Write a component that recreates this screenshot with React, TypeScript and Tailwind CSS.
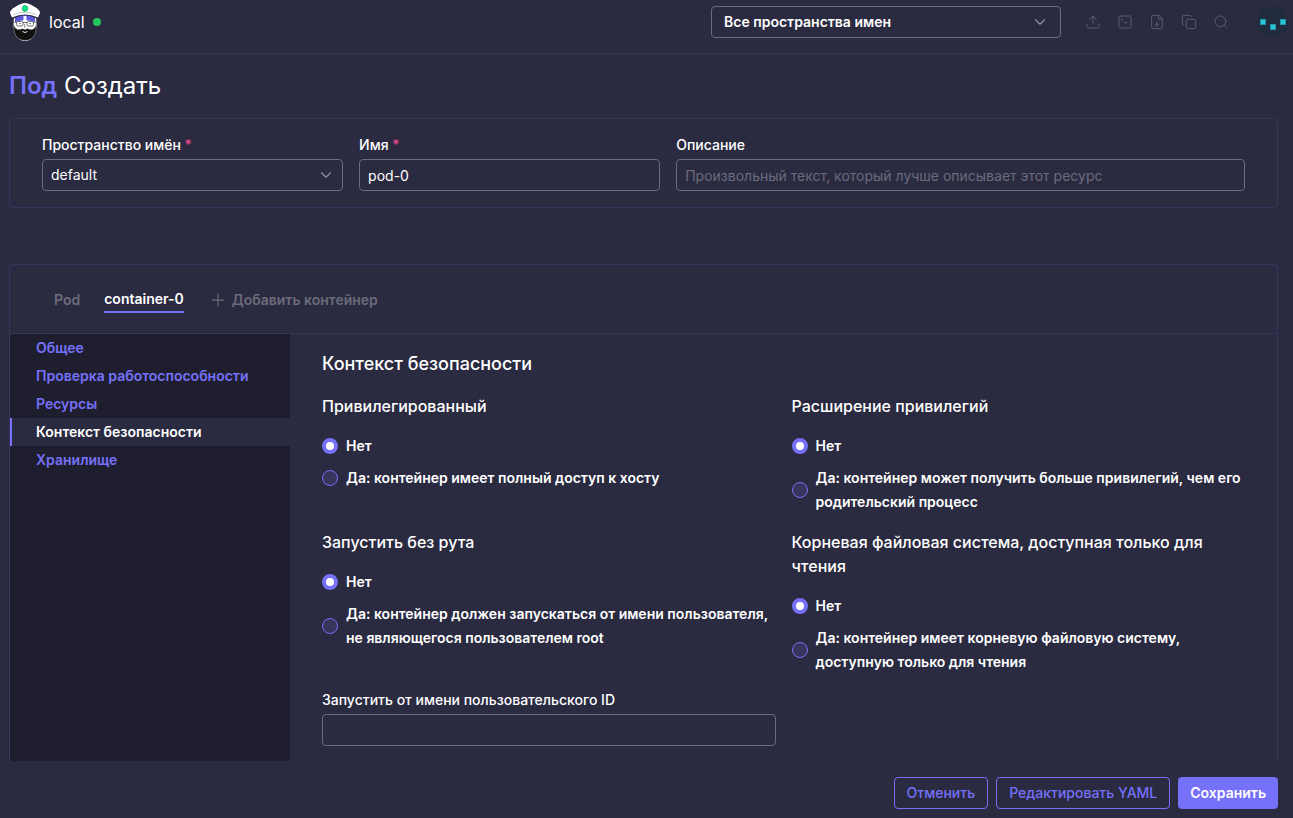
import type { ReactNode } from "react";
import clsx from "clsx";
import {
  ChevronDown,
  Copy,
  FileDown,
  Plus,
  Search,
  SquareTerminal,
  Upload,
} from "lucide-react";

const Logo = () => (
  <svg className="w-8 h-10" viewBox="0 0 32 40" aria-hidden="true">
    <path d="M5 16C4 23 5 30 7 34Q11 39 16 39Q21 39 25 34C27 30 28 23 27 16Z" fill="#fff" />
    <path
      d="M5 23Q4.500 30 6.500 33.500Q10 38.500 16 38.500Q22 38.500 25.500 33.500Q27.500 30 27 23Q25.500 28 21.500 27.500Q18.500 26 16 27.500Q13.500 26 10.500 27.500Q6.500 28 5 23Z"
      fill="#111"
      stroke="#bbb"
      strokeWidth="0.4"
    />
    <path d="M6 16Q16 10.500 26 16L26 20Q16 16.500 6 20Z" fill="#5d5ae0" />
    <path d="M14.500 14h3v5h-3z" fill="#fff" />
    <path
      d="M3 15.500L1 11Q1 7.500 7 4.500Q12 1 16 1Q20 1 25 4.500Q31 7.500 31 11L29 15.500Q16 9.500 3 15.500Z"
      fill="#fff"
    />
    <path d="M4.500 12.500Q16 8 27.500 12.500" fill="none" stroke="#888" strokeWidth="0.5" />
    <ellipse cx="16" cy="6.500" rx="2.800" ry="3" fill="#00e68a" stroke="#147a48" strokeWidth="0.5" />
    <g fill="#fff" stroke="#333" strokeWidth="0.7">
      <rect x="7.500" y="19.500" width="6.500" height="4.500" rx="1.500" />
      <rect x="18" y="19.500" width="6.500" height="4.500" rx="1.500" />
      <path d="M14 20.500h4M7.500 20.500L5 20M24.500 20.500L27 20" fill="none" />
      <path d="M15.500 22v3h1.500" fill="none" strokeWidth="0.5" />
    </g>
    <path d="M10 21.500h2M20 21.500h2" stroke="#333" strokeWidth="0.6" />
    <path d="M13.500 29.500Q16 31.500 18.500 29.500" fill="none" stroke="#fff" strokeWidth="0.9" />
  </svg>
);

const Avatar = () => (
  <svg className="w-8 h-8" viewBox="0 0 32 32" aria-hidden="true">
    <circle cx="16" cy="16" r="16" fill="#222b3e" />
    <g fill="#26c6da" stroke="#2491a5">
      <rect x="3.500" y="13.500" width="5" height="5" />
      <rect x="13.500" y="18.500" width="5" height="5" />
      <rect x="23.500" y="13.500" width="5" height="5" />
    </g>
  </svg>
);

const actions = [
  { label: "Импортировать YAML", icon: Upload },
  { label: "Терминал", icon: SquareTerminal },
  { label: "Скачать KubeConfig", icon: FileDown },
  { label: "Копировать KubeConfig", icon: Copy },
  { label: "Поиск ресурсов", icon: Search },
];

const Header = () => {
  return (
    <header className="shrink-0 border-b border-[#37355b] pb-[9px]">
      <div className="flex h-11 items-center pl-[9px] pr-1">
        <Logo />
        <span className="ml-2 text-base">local</span>
        <span className="ml-2 size-2 rounded-full bg-[#22c55e]" />
        <div className="relative ml-auto w-[350px]">
          <select
            aria-label="Пространства имен"
            className="h-8 w-full appearance-none rounded border border-[#6c6b7b] bg-transparent px-3 text-sm font-semibold"
          >
            <option>Все пространства имен</option>
          </select>
          <ChevronDown
            className="pointer-events-none absolute right-3 top-[7px] size-[18px] text-[#9291a0]"
            strokeWidth={1.5}
          />
        </div>
        <div className="ml-4 flex">
          {actions.map(({ label, icon: Icon }) => (
            <button
              key={label}
              aria-label={label}
              className="flex size-8 items-center justify-center text-[#5c5a6e]"
            >
              <Icon size={16} strokeWidth={1.5} />
            </button>
          ))}
        </div>
        <button aria-label="Профиль" className="ml-5">
          <Avatar />
        </button>
      </div>
    </header>
  );
};

const Field = ({
  id,
  label,
  required,
  children,
}: {
  id: string;
  label: string;
  required?: boolean;
  children: ReactNode;
}) => (
  <div className="flex flex-col gap-1">
    <label htmlFor={id} className="text-sm font-medium">
      {label}
      {required && <span className="text-[#e5488c]"> *</span>}
    </label>
    {children}
  </div>
);

const inputClass =
  "h-8 w-full rounded border border-[#6c6b7b] bg-transparent px-2 text-sm placeholder:text-[#6c6b7b] outline-none";

const MetadataForm = () => (
  <div className="grid shrink-0 grid-cols-[9fr_9fr_17fr] gap-4 rounded border border-[#37355b] px-8 py-4">
    <Field id="namespace" label="Пространство имён" required>
      <div className="relative">
        <select id="namespace" className={clsx(inputClass, "appearance-none")}>
          <option>default</option>
        </select>
        <ChevronDown
          className="pointer-events-none absolute right-2 top-[7px] size-[18px] text-[#9291a0]"
          strokeWidth={1.5}
        />
      </div>
    </Field>
    <Field id="name" label="Имя" required>
      <input id="name" className={inputClass} defaultValue="pod-0" />
    </Field>
    <Field id="description" label="Описание">
      <input
        id="description"
        className={inputClass}
        placeholder="Произвольный текст, который лучше описывает этот ресурс"
      />
    </Field>
  </div>
);

const sections = [
  "Общее",
  "Проверка работоспособности",
  "Ресурсы",
  "Контекст безопасности",
  "Хранилище",
];

const Sidebar = () => (
  <nav className="w-[280px] shrink-0 bg-[#1f1e2f] text-sm font-semibold">
    {sections.map((name) => (
      <a
        key={name}
        href="#"
        className={clsx(
          "block border-l-2 pl-6 leading-7",
          name === "Контекст безопасности"
            ? "border-[#7571f9] bg-[#2a2a40] text-white"
            : "border-transparent text-[#7571f9]"
        )}
      >
        {name}
      </a>
    ))}
  </nav>
);

const RadioGroup = ({
  name,
  title,
  yes,
}: {
  name: string;
  title: string;
  yes: string;
}) => (
  <fieldset>
    <legend className="mb-4 text-base font-medium">{title}</legend>
    <div className="flex flex-col gap-2">
      {["Нет", yes].map((text, i) => (
        <label key={text} className="flex items-center gap-2 text-sm font-semibold leading-6">
          <input
            type="radio"
            name={name}
            defaultChecked={i === 0}
            className="size-4 shrink-0 appearance-none rounded-full border border-[#7571f9] bg-[#37355b] checked:border-4 checked:bg-white"
          />
          {text}
        </label>
      ))}
    </div>
  </fieldset>
);

const SecurityContext = () => (
  <section className="flex-1 px-8 py-4">
    <h2 className="mb-4 text-lg font-medium leading-7">Контекст безопасности</h2>
    <div className="grid grid-cols-2 gap-4">
      <RadioGroup
        name="privileged"
        title="Привилегированный"
        yes="Да: контейнер имеет полный доступ к хосту"
      />
      <RadioGroup
        name="escalation"
        title="Расширение привилегий"
        yes="Да: контейнер может получить больше привилегий, чем его родительский процесс"
      />
      <RadioGroup
        name="non-root"
        title="Запустить без рута"
        yes="Да: контейнер должен запускаться от имени пользователя, не являющегося пользователем root"
      />
      <RadioGroup
        name="read-only"
        title="Корневая файловая система, доступная только для чтения"
        yes="Да: контейнер имеет корневую файловую систему, доступную только для чтения"
      />
      <Field id="user-id" label="Запустить от имени пользовательского ID">
        <input id="user-id" className={inputClass} />
      </Field>
    </div>
  </section>
);

const Tabs = () => (
  <div className="flex h-[69px] shrink-0 items-center border-b border-[#37355b] px-11 pt-0.5 text-sm font-semibold text-[#6c6b7b]">
    <button>Pod</button>
    <button className="ml-6 border-b-2 border-[#7571f9] py-0.5 text-white">container-0</button>
    <button className="ml-6 flex items-center gap-1">
      <Plus size={20} strokeWidth={1.5} />
      Добавить контейнер
    </button>
  </div>
);

const Footer = () => (
  <footer className="flex shrink-0 justify-end gap-2 pb-[9px] pl-[9px] pr-[15px] pt-4 text-sm font-medium">
    <button className="h-8 rounded border border-[#7571f9] px-3 text-[#7571f9]">Отменить</button>
    <button className="h-8 rounded border border-[#7571f9] px-3 text-[#7571f9]">
      Редактировать YAML
    </button>
    <button className="h-8 rounded bg-[#7571f9] px-3 font-semibold text-white">Сохранить</button>
  </footer>
);

const App = () => {
  return (
    <div className="flex h-screen flex-col bg-[#2a2a40] font-['Inter',sans-serif] text-white">
      <Header />
      <main className="flex min-h-0 flex-1 flex-col overflow-hidden pl-[9px] pr-[15px]">
        <h1 className="my-4 text-2xl leading-8">
          <span className="font-semibold text-[#7571f9]">Под</span> Создать
        </h1>
        <MetadataForm />
        <div className="mt-14 flex flex-1 flex-col rounded-t border border-b-0 border-[#37355b]">
          <Tabs />
          <div className="flex flex-1">
            <Sidebar />
            <SecurityContext />
          </div>
        </div>
      </main>
      <Footer />
    </div>
  );
};

export default App;
